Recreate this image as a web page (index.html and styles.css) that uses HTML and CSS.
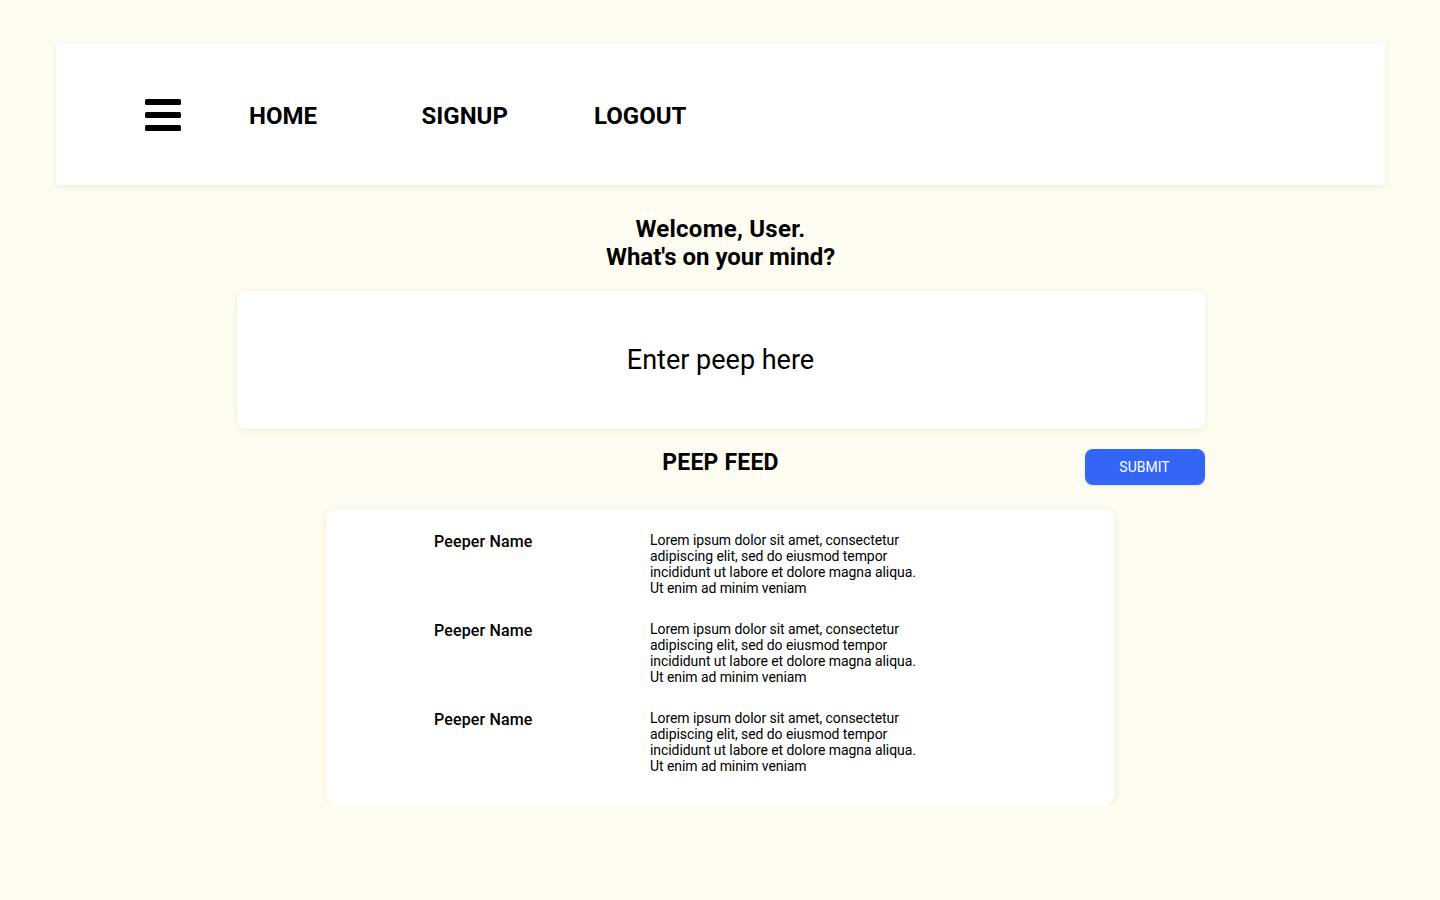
FILE: index.html
```html
<!DOCTYPE html>
<html lang="en">
<head>
<meta charset="utf-8">
<title>Peeps</title>
<link rel="stylesheet" href="styles.css">
</head>
<body>
<div class="page">
  <nav class="nav">
    <span class="burger" aria-label="Menu">
      <svg width="36" height="32" viewBox="0 0 36 32"><rect x="0" y="0" width="36" height="6" rx="1.5"/><rect x="0" y="13" width="36" height="6" rx="1.5"/><rect x="0" y="26" width="36" height="6" rx="1.5"/></svg>
    </span>
    <a class="nav-link" href="#">HOME</a>
    <a class="nav-link" href="#">SIGNUP</a>
    <a class="nav-link" href="#">LOGOUT</a>
  </nav>

  <h1 class="welcome"><span class="welcome-first">Welcome, User.</span><br>What's on your mind?</h1>

  <div class="composer">
    <div class="peep-input">Enter peep here</div>
    <div class="feed-bar">
      <h2 class="feed-title">PEEP FEED</h2>
      <button class="submit">SUBMIT</button>
    </div>
  </div>

  <section class="feed">
    <div class="peep">
      <div class="peep-name">Peeper Name</div>
      <div class="peep-text">Lorem ipsum dolor sit amet, consectetur adipiscing elit, sed do eiusmod tempor incididunt ut labore et dolore magna aliqua. Ut enim ad minim veniam</div>
    </div>
    <div class="peep">
      <div class="peep-name">Peeper Name</div>
      <div class="peep-text">Lorem ipsum dolor sit amet, consectetur adipiscing elit, sed do eiusmod tempor incididunt ut labore et dolore magna aliqua. Ut enim ad minim veniam</div>
    </div>
    <div class="peep">
      <div class="peep-name">Peeper Name</div>
      <div class="peep-text">Lorem ipsum dolor sit amet, consectetur adipiscing elit, sed do eiusmod tempor incididunt ut labore et dolore magna aliqua. Ut enim ad minim veniam</div>
    </div>
  </section>
</div>
</body>
</html>
```

FILE: styles.css
```css
* { box-sizing: border-box; }

html, body {
  margin: 0;
  padding: 0;
  background: #fffdf1;
  font-family: Roboto, "Liberation Sans", Arial, sans-serif;
  color: #000;
}

.page {
  padding: 43px 55px 0 56px;
  display: flex;
  flex-direction: column;
  align-items: center;
}

.nav {
  width: 100%;
  height: 142px;
  background: #fff;
  box-shadow: 0 2px 6px rgba(200, 190, 150, 0.25);
  display: flex;
  align-items: center;
  padding-left: 89px;
}

.burger {
  display: flex;
  width: 36px;
  height: 32px;
  margin-right: 68px;
  margin-top: 2px;
}

.burger svg { fill: #000; display: block; }

.nav-link {
  width: 172.5px;
  font-size: 24px;
  font-weight: 700;
  color: #000;
  text-decoration: none;
  line-height: 28px;
  margin-top: 4px;
}

.welcome {
  margin: 30px 0 0;
  font-size: 24px;
  line-height: 28px;
  font-weight: 700;
  text-align: center;
}

.welcome-first { letter-spacing: 0.25px; }

.composer {
  width: 968px;
  margin-top: 20px;
  display: flex;
  flex-direction: column;
}

.peep-input {
  height: 138px;
  background: #fff;
  border-radius: 8px;
  box-shadow: 0 1px 6px rgba(200, 185, 130, 0.3);
  display: flex;
  align-items: center;
  justify-content: center;
  font-size: 27px;
}

.feed-bar {
  margin-top: 20px;
  display: grid;
  grid-template-columns: 1fr auto 1fr;
  align-items: start;
}

.feed-title {
  grid-column: 2;
  margin: 0;
  font-size: 23px;
  letter-spacing: 0.2px;
  line-height: 28px;
  font-weight: 700;
}

.submit {
  grid-column: 3;
  justify-self: end;
  width: 120px;
  height: 36px;
  border: none;
  border-radius: 8px;
  background: #3366f4;
  color: #fff;
  font-family: Roboto, "Liberation Sans", Arial, sans-serif;
  font-size: 14px;
  box-shadow: 0 1px 3px rgba(0, 0, 0, 0.12);
  padding: 0;
}

.feed {
  width: 789px;
  margin-top: 24px;
  background: #fff;
  border-radius: 10px;
  box-shadow: 0 1px 6px rgba(200, 185, 130, 0.3);
  padding: 23px 0 30px 108px;
  display: flex;
  flex-direction: column;
  gap: 25px;
}

.peep {
  display: grid;
  grid-template-columns: 216px 280px;
}

.peep-name {
  font-size: 16px;
  font-weight: 500;
  letter-spacing: 0.15px;
  line-height: 20px;
}

.peep-text {
  font-size: 14px;
  letter-spacing: -0.07px;
  line-height: 16px;
}
```
